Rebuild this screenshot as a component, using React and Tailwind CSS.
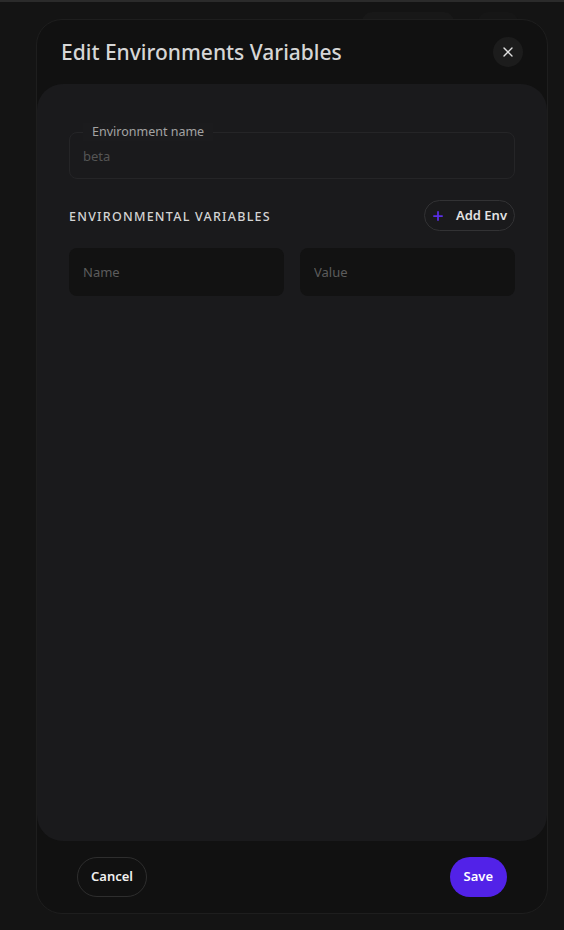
import React from "react";
import { X, Plus } from "lucide-react";

const App = () => {
  return (
    <div
      className="relative h-[930px] w-full overflow-hidden bg-[#141414] text-[#e5e5e5]"
      style={{ fontFamily: '"Noto Sans", "Open Sans", sans-serif' }}
    >
      {/* top bar */}
      <div className="h-[2px] w-full bg-[#2b2b2b]" />

      {/* faint page content behind the modal */}
      <div className="flex justify-end gap-[24px] pr-[46px] pt-[10px]">
        <div className="h-[20px] w-[92px] rounded-full bg-[#181818]" />
        <div className="h-[20px] w-[40px] rounded-full bg-[#161616]" />
      </div>

      {/* modal */}
      <div className="absolute inset-0 flex pl-[36px] pt-[19px]">
        <div className="flex h-[895px] w-[512px] flex-col rounded-[26px] border border-[#1e1e1e] bg-[#111111]">
          {/* header */}
          <div className="flex h-[64px] shrink-0 items-center justify-between pl-[24px] pr-[24px]">
            <h2 className="pt-[1px] text-[21px] font-medium text-[#d6d6d6]">Edit Environments Variables</h2>
            <button className="flex h-[30px] w-[30px] items-center justify-center rounded-full bg-[#1c1c1c] text-[#e0e0e0]">
              <X size={16} strokeWidth={2} />
            </button>
          </div>

          {/* body */}
          <div className="flex-1 rounded-[26px] bg-[#1a1a1c] px-[32px] pt-[39px]">
            <fieldset className="rounded-[8px] border border-[#252527] px-[13px] pb-[13px]">
              <legend className="bg-[#1b1b1d] px-[9px] text-[12.5px] leading-[18px] text-[#a3a3a3]">Environment name</legend>
              <input
                className="block w-full bg-transparent pt-[6px] text-[13px] leading-[18px] text-[#555] outline-none"
                defaultValue="beta"
              />
            </fieldset>

            <div className="mt-[21px] flex items-center justify-between">
              <span className="pt-[3px] text-[12.5px] font-medium tracking-[0.1em] text-[#d4d4d4]">ENVIRONMENTAL VARIABLES</span>
              <button className="flex h-[31px] items-center rounded-full border border-[#323234] pl-[6px] pr-[7px] text-[13px] font-semibold text-[#e2e2e2]">
                <Plus size={14} strokeWidth={3} className="text-[#5a2ee6]" />
                <span className="ml-[11px]">Add Env</span>
              </button>
            </div>

            <div className="mt-[17px] grid grid-cols-2 gap-[16px]">
              <input
                className="h-[48px] rounded-[8px] bg-[#121212] px-[14px] text-[13px] text-[#ccc] outline-none placeholder:text-[#5c5c5c]"
                placeholder="Name"
              />
              <input
                className="h-[48px] rounded-[8px] bg-[#121212] px-[14px] text-[13px] text-[#ccc] outline-none placeholder:text-[#5c5c5c]"
                placeholder="Value"
              />
            </div>
          </div>

          {/* footer */}
          <div className="flex h-[72px] shrink-0 items-center justify-between px-[40px]">
            <button className="h-[40px] rounded-full border border-[#2e2e2e] px-[13px] text-[13px] font-semibold text-[#f0f0f0]">
              Cancel
            </button>
            <button className="h-[40px] rounded-full bg-[#5222e8] px-[14px] text-[13px] font-semibold text-white">
              Save
            </button>
          </div>
        </div>
      </div>
    </div>
  );
};

export default App;
